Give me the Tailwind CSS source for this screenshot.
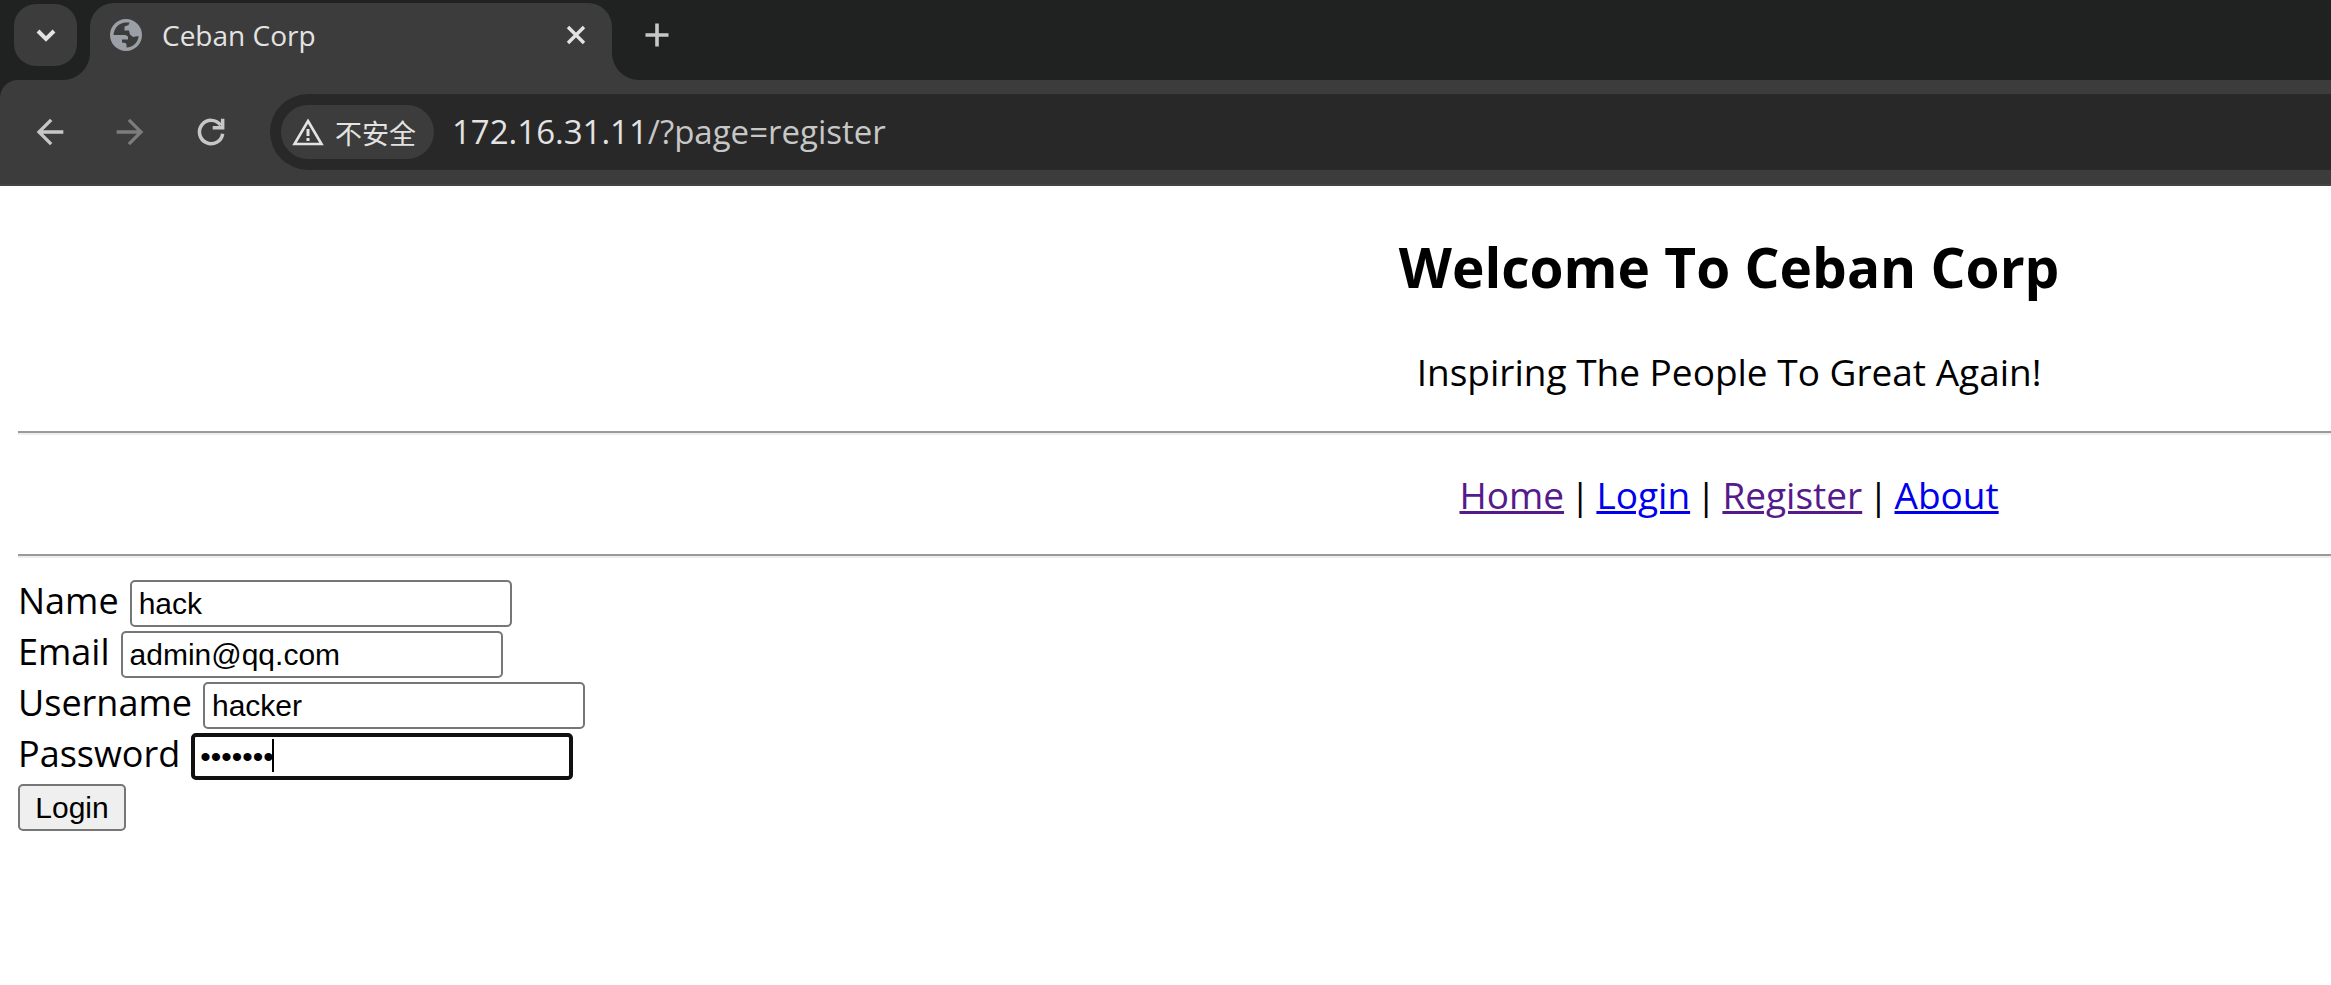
<!DOCTYPE html>
<html lang="en">
<head>
<meta charset="utf-8">
<title>Ceban Corp</title>
<script src="https://cdn.jsdelivr.net/npm/@tailwindcss/browser@4"></script>
</head>
<body class="min-h-screen overflow-x-hidden bg-white font-['Open_Sans','Noto_Sans_CJK_SC',sans-serif] text-black">
<header class="bg-[#202221]">
  <div class="flex h-20 items-start pl-3.5">
    <button type="button" aria-label="Search tabs" class="mt-1 flex h-[62px] w-[63px] shrink-0 items-center justify-center rounded-[22px] bg-[#3c3c3c]">
      <svg class="size-8" viewBox="0 0 32 32" fill="none" stroke="#e3e3e3" stroke-width="4"><path d="M8 12l8 8 8-8"/></svg>
    </button>
    <div class="relative ml-[13px] mt-[3px] flex h-[77px] w-[522px] items-start rounded-t-3xl bg-[#3c3c3c] pl-5 pr-6">
      <svg class="absolute -left-[27px] bottom-0 size-[27px]" viewBox="0 0 27 27" fill="#3c3c3c"><path d="M27 0v27H0A27 27 0 0 0 27 0z"/></svg>
      <svg class="absolute -right-[27px] bottom-0 size-[27px]" viewBox="0 0 27 27" fill="#3c3c3c"><path d="M0 0v27h27A27 27 0 0 1 0 0z"/></svg>
      <div class="flex h-16 w-full items-center">
        <svg class="size-8" viewBox="0 0 32 32"><circle cx="16" cy="16" r="16" fill="#9aa0a6"/><path fill="#3c3c3c" d="M3.500 16C4 9 9 4 15 3.500h4.500L18.500 6l-4 1.500v4h4.500l1 4 3 2.500 5.500-1C28.500 23 23 28.500 16.500 28.500v-3l-1-1.500-3.500-.5v-3h6v-3l-2.500-1.500z"/></svg>
        <span class="ml-5 grow text-[28px] leading-9 text-[#e3e3e3]">Ceban Corp</span>
        <button type="button" aria-label="Close tab" class="flex size-6 items-center justify-center">
          <svg class="size-6" viewBox="0 0 24 24" fill="none" stroke="#e3e3e3" stroke-width="3.4"><path d="M4 4l16 16M20 4L4 20"/></svg>
        </button>
      </div>
    </div>
    <button type="button" aria-label="New tab" class="ml-8 mt-[22px] size-[26px]">
      <svg class="size-[26px]" viewBox="0 0 26 26" fill="none" stroke="#c7c7c7" stroke-width="3.6"><path d="M13 1.500v23M1.500 13h23"/></svg>
    </button>
  </div>
  <div class="flex h-[106px] items-center rounded-tl-[18px] border-b-2 border-[#444] bg-[#3c3c3c] pl-[30px]">
    <button type="button" aria-label="Back" class="size-10"><svg class="size-10" viewBox="0 0 24 24" fill="#c7c7c7"><path d="M20 11H7.830l5.590-5.590L12 4l-8 8 8 8 1.410-1.410L7.830 13H20v-2z"/></svg></button>
    <button type="button" aria-label="Forward" class="ml-10 size-10"><svg class="size-10" viewBox="0 0 24 24" fill="#7c7c7c"><path d="M12 4l-1.410 1.410L16.170 11H4v2h12.170l-5.580 5.590L12 20l8-8z"/></svg></button>
    <button type="button" aria-label="Reload" class="ml-[41px] size-10"><svg class="size-10" viewBox="0 0 24 24" fill="none" stroke="#c7c7c7" stroke-width="2.100"><path d="M19 13A7 7 0 1 1 17.800 8M19 4v5.500h-6"/></svg></button>
    <div class="ml-[39px] flex h-19 min-w-0 grow items-center rounded-l-full bg-[#282828] pl-[11px]">
      <button type="button" class="flex h-[54px] w-[153px] shrink-0 items-center rounded-full bg-[#3c3c3c] pl-[11px] text-[27px] leading-9 text-[#e3e3e3]">
        <svg class="mr-[11px] h-7 w-8" viewBox="0 0 32 28"><path d="M16 3L29.500 26h-27z" fill="none" stroke="#e3e3e3" stroke-width="2.600"/><path d="M14.500 11h3v7h-3zM14.500 20h3v3h-3z" fill="#e3e3e3"/></svg><span class="pt-1">不安全</span>
      </button>
      <div class="relative ml-[18px] grow text-[33px] leading-12 text-[#c7c7c7]"><span class="text-[#e3e3e3]">172.16.31.11</span>/?page=register
        <input type="text" class="absolute inset-0 w-full outline-none" aria-label="Address">
      </div>
    </div>
  </div>
</header>
<main class="pl-4">
  <div class="pl-[48%] text-center">
    <h2 class="pt-[45px] text-[55px] font-bold leading-[72px]">Welcome To Ceban Corp</h2>
    <p class="mt-[45px] text-[37px] leading-12">Inspiring The People To Great Again!</p>
  </div>
  <hr class="ml-0.5 mt-[35px] h-1 border-t-2 border-b-2 border-t-[#9a9a9a] border-b-[#eee]">
  <nav class="mt-9 flex justify-center gap-1.5 pl-[48%] text-[37px] leading-12">
    <a href="#home" class="text-[#551a8b] underline decoration-3">Home</a><span>|</span>
    <a href="#login" class="text-[#0000ee] underline decoration-3">Login</a><span>|</span>
    <a href="#register" class="text-[#551a8b] underline decoration-3">Register</a><span>|</span>
    <a href="#about" class="text-[#0000ee] underline decoration-3">About</a>
  </nav>
  <hr class="ml-0.5 mt-[35px] h-1 border-t-2 border-b-2 border-t-[#9a9a9a] border-b-[#eee]">
  <form class="ml-0.5 mt-[22px] flex flex-col items-start gap-1 text-[36px] leading-[41px]">
    <div class="flex h-[47px] gap-[11px]"><label for="name">Name</label><input id="name" type="text" value="hack" class="w-[382px] rounded-[5px] border-2 border-[#767676] bg-white px-[7px] font-['Liberation_Sans',sans-serif] text-[30px]"></div>
    <div class="flex h-[47px] gap-[11px]"><label for="email">Email</label><input id="email" type="text" value="admin@qq.com" class="w-[382px] rounded-[5px] border-2 border-[#767676] bg-white px-[7px] font-['Liberation_Sans',sans-serif] text-[30px]"></div>
    <div class="flex h-[47px] gap-[11px]"><label for="username">Username</label><input id="username" type="text" value="hacker" class="w-[382px] rounded-[5px] border-2 border-[#767676] bg-white px-[7px] font-['Liberation_Sans',sans-serif] text-[30px]"></div>
    <div class="flex h-[47px] gap-[11px]"><label for="password">Password</label><div class="relative flex"><input id="password" type="password" value="hacker1" class="w-[382px] rounded-[5px] border-4 border-[#101010] bg-white px-[5px] font-['Liberation_Sans',sans-serif] text-[30px]"><span class="absolute left-[81px] top-1.5 h-[33px] w-0.5 bg-black"></span></div></div>
    <button type="submit" class="h-[47px] w-[108px] rounded-[5px] border-2 border-[#767676] bg-[#efefef] font-['Liberation_Sans',sans-serif] text-[30px] leading-8">Login</button>
  </form>
</main>
</body>
</html>
